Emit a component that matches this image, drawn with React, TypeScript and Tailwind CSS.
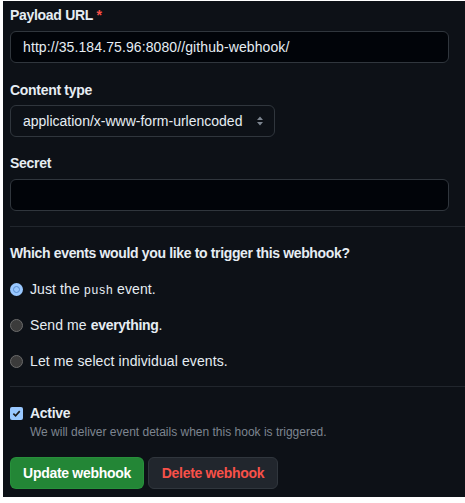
import React from "react";

const font = { fontFamily: '"Segoe UI", "Liberation Sans", Arial, sans-serif' };

const Radio = ({ checked }: { checked?: boolean }) =>
  checked ? (
    <span className="flex h-[13px] w-[13px] shrink-0 items-center justify-center rounded-full bg-[#99c8ff]">
      <span className="h-[7px] w-[7px] rounded-full border border-[#5a8fd0] bg-[#99c8ff]" />
    </span>
  ) : (
    <span className="h-[13px] w-[13px] shrink-0 rounded-full border border-[#6b6b6b] bg-[#3b3b3b]" />
  );

const RadioRow: React.FC<{ checked?: boolean; children: React.ReactNode }> = ({ checked, children }) => (
  <div className="flex h-5 items-center gap-[7px] text-sm tracking-[0.1px] text-[#e6edf3]">
    <Radio checked={checked} />
    <span>{children}</span>
  </div>
);

export default function App() {
  return (
    <div className="h-[503px] w-[465px] bg-white pl-[3px] pt-[1px]" style={font}>
      <div className="h-[496px] bg-[#0d1117] pl-[7px] pt-1">
        <div className="w-[439px]">
          <label className="block h-5 text-sm font-bold leading-5 tracking-[-0.3px] text-[#e6edf3]">
            Payload URL <span className="text-[#f85149]">*</span>
          </label>
          <div className="mt-1.5 flex h-8 items-center rounded-md border border-[#30363d] bg-[#010409] px-3 text-sm tracking-[0.1px] text-[#e6edf3]">
            http://35.184.75.96:8080//github-webhook/
          </div>

          <label className="mt-[17px] block h-5 text-sm font-bold leading-5 tracking-[-0.3px] text-[#e6edf3]">
            Content type
          </label>
          <div className="mt-[5px] flex h-8 w-[265px] items-center justify-between rounded-md border border-[#30363d] bg-[#0d1117] pl-3 pr-2.5 text-sm text-[#e6edf3]">
            <span className="whitespace-nowrap">application/x-www-form-urlencoded</span>
            <svg width="8" height="12" viewBox="0 0 8 12" className="shrink-0 text-[#7d8590]">
              <path d="M4 1.5 L7 5 H1 Z M4 10.5 L7 7 H1 Z" fill="currentColor" />
            </svg>
          </div>

          <label className="mt-4 block h-5 text-sm font-bold leading-5 tracking-[-0.3px] text-[#e6edf3]">
            Secret
          </label>
          <div className="mt-1.5 h-8 rounded-md border border-[#30363d] bg-[#010409]" />
        </div>

        <div className="mt-[15px] h-px bg-[#21262d]" />

        <p className="mt-4 h-5 text-sm font-bold leading-5 tracking-[-0.35px] text-[#e6edf3]">
          Which events would you like to trigger this webhook?
        </p>

        <div className="mt-4 flex flex-col gap-4">
          <RadioRow checked>
            Just the{" "}
            <code className="text-xs" style={{ fontFamily: '"Liberation Mono", monospace' }}>
              push
            </code>{" "}
            event.
          </RadioRow>
          <RadioRow>
            Send me <b className="font-bold tracking-[-0.3px]">everything</b>.
          </RadioRow>
          <RadioRow>Let me select individual events.</RadioRow>
        </div>

        <div className="mt-[15px] h-px bg-[#21262d]" />

        <div className="mt-4 flex h-5 items-center gap-[7px]">
          <span className="flex h-[13px] w-[13px] items-center justify-center rounded-[2px] bg-[#99c8ff]">
            <svg width="9" height="9" viewBox="0 0 10 10">
              <path d="M1.5 5.2 L4 7.6 L8.6 2.4" stroke="#1a1a1a" strokeWidth="1.8" fill="none" />
            </svg>
          </span>
          <span className="text-sm font-bold tracking-[-0.3px] text-[#e6edf3]">Active</span>
        </div>
        <p className="pl-5 text-xs leading-[18px] text-[#7d8590]">
          We will deliver event details when this hook is triggered.
        </p>

        <div className="mt-4 flex gap-1">
          <button className="h-8 w-[134px] rounded-md border border-[#2ea043]/40 bg-[#238636] text-sm font-bold tracking-[-0.3px] text-white">
            Update webhook
          </button>
          <button className="h-8 w-[130px] rounded-md border border-[#30363d] bg-[#21262d] text-sm font-bold tracking-[-0.3px] text-[#f85149]">
            Delete webhook
          </button>
        </div>
      </div>
    </div>
  );
}
